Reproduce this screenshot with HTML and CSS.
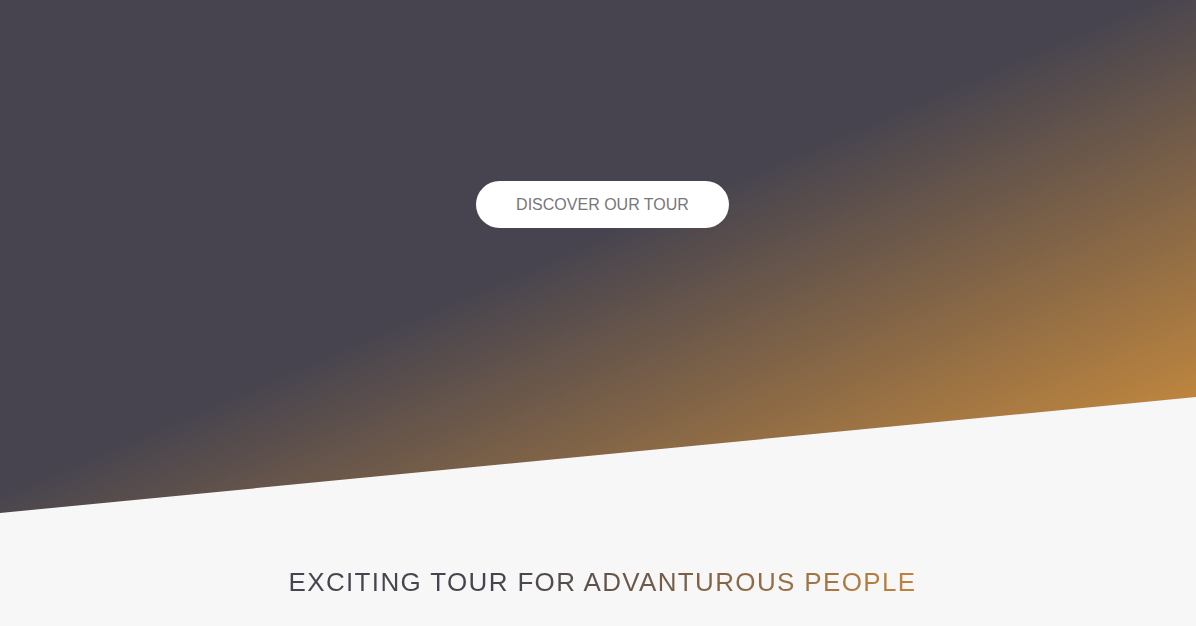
FILE: index.html
```html
<!DOCTYPE html>
<html lang="en">
<head>
<meta charset="utf-8">
<title>Tours</title>
<link rel="stylesheet" href="styles.css">
</head>
<body>
  <header class="hero">
    <div class="hero__box">
      <a href="#" class="btn">DISCOVER OUR TOUR</a>
    </div>
  </header>
  <main class="about">
    <div class="about__title-row">
      <h2 class="heading-secondary">EXCITING TOUR FOR ADVANTUROUS PEOPLE</h2>
    </div>
  </main>
</body>
</html>
```

FILE: styles.css
```css
* {
  box-sizing: border-box;
  margin: 0;
  padding: 0;
}

html, body {
  width: 100%;
  height: 100%;
  overflow: hidden;
}

body {
  background: #f7f7f7;
  font-family: "Liberation Sans", Arial, sans-serif;
}

.hero {
  height: 513px;
  background-image: linear-gradient(to right bottom, #47444f 48%, #de973a 100%);
  clip-path: polygon(0 0, 100% 0, 100% 397px, 0 100%);
}

.hero__box {
  display: flex;
  justify-content: center;
  padding-top: 181px;
  padding-left: 9px;
}

.btn {
  display: inline-block;
  padding: 15px 40px;
  font-size: 16px;
  line-height: 17px;
  color: #777777;
  background: #ffffff;
  border-radius: 100px;
  text-decoration: none;
}

.about {
  padding-top: 54px;
}

.about__title-row {
  display: flex;
  justify-content: center;
  padding-left: 9px;
}

.heading-secondary {
  display: inline-block;
  font-size: 26px;
  font-weight: 400;
  line-height: 30px;
  letter-spacing: 1.35px;
  background-image: linear-gradient(to right, #47444f 35%, #bf843f 100%);
  -webkit-background-clip: text;
  background-clip: text;
  color: transparent;
}
```
